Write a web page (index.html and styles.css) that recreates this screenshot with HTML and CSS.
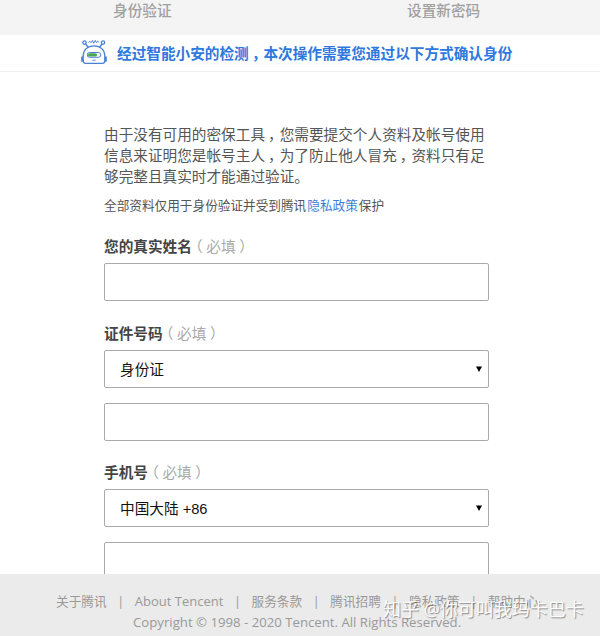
FILE: index.html
```
<!DOCTYPE html>
<html lang="zh-CN">
<head>
    <meta charset="UTF-8">
    <meta name="viewport" content="width=device-width, initial-scale=1.0">
    <title>身份验证</title>
    <link rel="stylesheet" href="styles.css">
</head>
<body>
    <div class="steps">
        <div class="step step-verify">身份验证</div>
        <div class="step step-password">设置新密码</div>
    </div>

    <div class="notice">
        <svg class="robot" width="28" height="26" viewBox="0 0 28 26" fill="none" stroke="#4a80d8" stroke-width="1.3">
            <path d="M3.2 22V17C3.2 11 7.500 6.800 14 6.800S24.800 11 24.800 17V22Q24.800 24.300 22.300 24.300H5.700Q3.200 24.300 3.200 22Z"/>
            <path d="M2.200 17.500V22.800M25.800 17.500V22.800" stroke-width="2"/>
            <circle cx="4.500" cy="3.600" r="1.700"/>
            <circle cx="23" cy="3.600" r="1.700"/>
            <path d="M5.600 5L8 8M22 5L19.800 8"/>
            <path d="M8.500 3.300L10 2.300L11.200 3.800L12.500 1.300L13.800 4.300L15.200 1.300L16.500 3.800L17.600 2L19 3.300" stroke-width="0.900"/>
            <rect x="7.200" y="13.500" width="13.600" height="4.800" rx="2.400" stroke-width="1"/>
            <rect x="8" y="14.200" width="9" height="3.400" rx="1.700" fill="#4ba552" stroke="none"/>
            <path d="M12.300 21.200H15.700" stroke-width="0.900"/>
        </svg>
        <span>经过智能小安的检测<i class="comma">，</i>本次操作需要您通过以下方式确认身份</span>
    </div>

    <div class="main">
        <p class="intro">由于没有可用的密保工具<i class="comma">，</i>您需要提交个人资料及帐号使用<br>信息来证明您是帐号主人<i class="comma">，</i>为了防止他人冒充<i class="comma">，</i>资料只有足<br>够完整且真实时才能通过验证。</p>
        <p class="policy">全部资料仅用于身份验证并受到腾讯<a href="#">隐私政策</a>保护</p>

        <div class="form-group">
            <label for="name">您的真实姓名<span class="required"><i>（</i>必填<i>）</i></span></label>
            <input class="field" type="text" id="name">
        </div>

        <div class="form-group form-group-id">
            <label for="idType">证件号码<span class="required"><i>（</i>必填<i>）</i></span></label>
            <div class="field select" id="idType">身份证<svg class="arrow" width="6" height="6" viewBox="0 0 6 6"><path d="M0 0.500H6L3 6Z"/></svg></div>
            <input class="field" type="text">
        </div>

        <div class="form-group">
            <label for="region">手机号<span class="required"><i>（</i>必填<i>）</i></span></label>
            <div class="field select" id="region">中国大陆 +86<svg class="arrow" width="6" height="6" viewBox="0 0 6 6"><path d="M0 0.500H6L3 6Z"/></svg></div>
            <input class="field" type="text">
        </div>
    </div>

    <div class="footer">
        <div class="links">
            <span>关于腾讯</span><b>|</b><span class="en">About Tencent</span><b>|</b><span>服务条款</span><b>|</b><span>腾讯招聘</span><b>|</b><span>隐私政策</span><b>|</b><span>帮助中心</span>
        </div>
        <div class="copyright">Copyright © 1998 - 2020 Tencent. All Rights Reserved.</div>
    </div>
    <div class="watermark">知乎 @你可叫我玛卡巴卡</div>
</body>
</html>
```

FILE: styles.css
```
* {
    box-sizing: border-box;
}
body {
    margin: 0;
    height: 636px;
    overflow: hidden;
    position: relative;
    background: #fff;
    color: #555;
    font-family: "Open Sans", "Noto Sans CJK SC", sans-serif;
    font-size: 14.65px;
}
i {
    font-style: normal;
}
.steps {
    display: flex;
    height: 35px;
    background: #f4f4f4;
    color: #a0a0a0;
    font-weight: 500;
    line-height: 20px;
}
.step {
    width: 300px;
    white-space: nowrap;
}
.step-verify {
    padding-left: 113px;
}
.step-password {
    padding-left: 107px;
}
.notice {
    display: flex;
    align-items: center;
    height: 37px;
    padding: 0 0 2px 80px;
    border-bottom: 1px solid #f0f0f0;
    color: #2e78de;
    font-weight: 700;
    white-space: nowrap;
}
.robot {
    margin-right: 9px;
}
.comma {
    font-feature-settings: "halt";
    padding: 0 4.3px 0 3px;
}
.main {
    width: 385px;
    margin-left: 104px;
    padding-top: 52px;
}
.intro {
    margin: 0;
    line-height: 21.2px;
    white-space: nowrap;
}
.policy {
    margin: 7px 0 0;
    font-size: 12.65px;
    line-height: 20px;
}
.policy a {
    margin: 0 1px;
    color: #3b7fdb;
    text-decoration: none;
}
.form-group {
    margin-top: 20px;
}
.form-group-id {
    margin-top: 21px;
}
label {
    display: block;
    height: 28px;
    line-height: 22px;
    color: #444;
    font-weight: 700;
}
.required {
    color: #aaa;
    font-weight: 400;
}
.required i {
    font-feature-settings: "halt";
    padding: 0 3.6px;
}
.field {
    display: block;
    width: 385px;
    height: 38px;
    margin: 0 0 16px;
    padding: 0 6px 0 15px;
    border: 1px solid #aaa;
    border-radius: 2px;
    background: #fff;
}
.select {
    display: flex;
    align-items: center;
    justify-content: space-between;
    margin-bottom: 15px;
    color: #111;
    font-family: "Liberation Sans", "Noto Sans CJK SC", sans-serif;
}
.arrow {
    fill: #000;
}
.footer {
    position: absolute;
    left: 0;
    right: 0;
    bottom: 0;
    height: 62px;
    padding-top: 17px;
    background: #ebebeb;
    color: #999;
    font-size: 12.65px;
    line-height: 21px;
}
.links {
    display: flex;
    padding-left: 56px;
    white-space: nowrap;
}
.links b {
    width: 28.2px;
    font-weight: 400;
    text-align: center;
}
.en {
    font-size: 13px;
}
.copyright {
    padding-left: 133px;
    font-size: 13.2px;
    white-space: nowrap;
}
.watermark {
    position: absolute;
    left: 383px;
    top: 596px;
    color: rgba(255, 255, 255, 0.95);
    font-size: 18px;
    line-height: 27px;
    text-shadow: 1px 1px 1px rgba(0, 0, 0, 0.4);
    white-space: nowrap;
}
```
